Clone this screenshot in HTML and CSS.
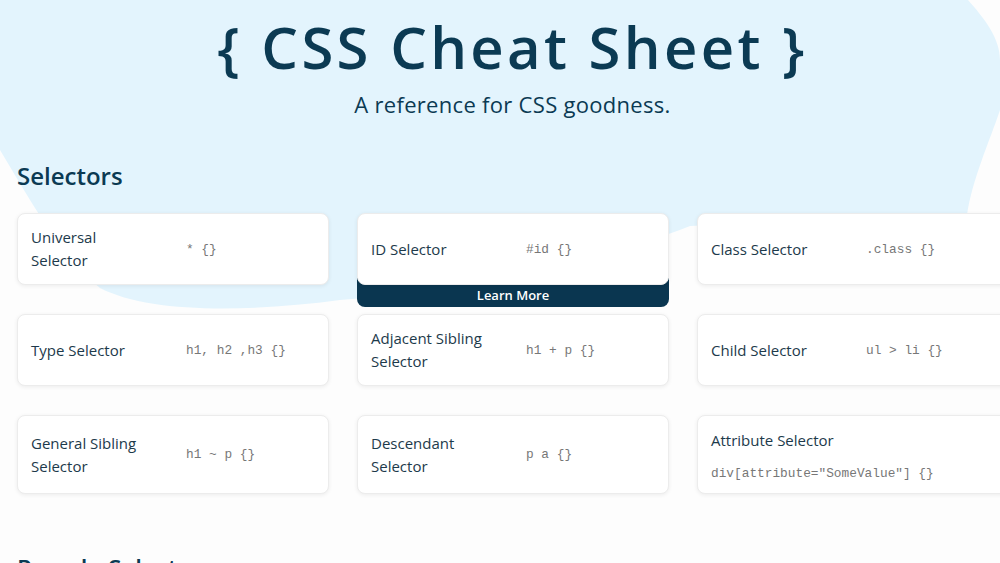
FILE: index.html
```html
<!DOCTYPE html>
<html lang="en">
<head>
    <meta charset="utf-8" />
    <title>CSS Cheat Sheet</title>
    <link rel="stylesheet" href="styles.css">
</head>
<body>
    <svg class="blob" width="1000" height="320" viewBox="0 0 1000 320" aria-hidden="true">
        <path d="M0,0 L968,0 C984,18 1000,38 1000,60 L1000,110 C990,140 972,180 967,215 L690,226 C600,262 440,294 340,300 C250,312 150,314 100,288 C62,258 30,200 0,150 Z" fill="#e3f4fd"/>
    </svg>
    <div class="page">
        <header class="masthead">
            <h1 class="title">{ CSS Cheat Sheet }</h1>
            <p class="subtitle">A reference for CSS goodness.</p>
        </header>

        <section class="group">
            <h2 class="group-title">Selectors</h2>
            <div class="cards">
                <div class="card">
                    <div class="card-name">Universal Selector</div>
                    <code class="card-code">* {}</code>
                </div>
                <div class="card card-active">
                    <div class="card-name">ID Selector</div>
                    <code class="card-code">#id {}</code>
                    <div class="learn-more">Learn More</div>
                </div>
                <div class="card">
                    <div class="card-name">Class Selector</div>
                    <code class="card-code">.class {}</code>
                </div>
                <div class="card">
                    <div class="card-name">Type Selector</div>
                    <code class="card-code">h1, h2 ,h3 {}</code>
                </div>
                <div class="card">
                    <div class="card-name">Adjacent Sibling Selector</div>
                    <code class="card-code">h1 + p {}</code>
                </div>
                <div class="card">
                    <div class="card-name">Child Selector</div>
                    <code class="card-code">ul &gt; li {}</code>
                </div>
                <div class="card">
                    <div class="card-name">General Sibling Selector</div>
                    <code class="card-code">h1 ~ p {}</code>
                </div>
                <div class="card">
                    <div class="card-name">Descendant Selector</div>
                    <code class="card-code">p a {}</code>
                </div>
                <div class="card card-stacked">
                    <div class="card-name">Attribute Selector</div>
                    <code class="card-code">div[attribute="SomeValue"] {}</code>
                </div>
            </div>
        </section>

        <section class="group">
            <h2 class="group-title">Pseudo Selectors</h2>
        </section>
    </div>
</body>
</html>
```

FILE: styles.css
```css
html, body {
  margin: 0;
  padding: 0;
  overflow: hidden;
}
body {
  background: #fdfdfd;
  color: #0b3a53;
  font-family: "Open Sans", "Noto Sans", sans-serif;
  position: relative;
  height: 563px;
}
.blob {
  position: absolute;
  left: 0;
  top: 0;
  z-index: 0;
}
.page {
  position: relative;
  z-index: 1;
  width: 1025px;
  box-sizing: border-box;
  padding: 0 17px;
}
.masthead {
  text-align: center;
  padding-top: 12px;
}
.title {
  margin: 0;
  font-size: 58px;
  line-height: 70px;
  font-weight: 600;
  letter-spacing: 3.3px;
}
.subtitle {
  margin: 9px 0 0;
  font-size: 22px;
  line-height: 26px;
  letter-spacing: 0.3px;
}
.group-title {
  margin: 0 0 22px;
  font-size: 24px;
  line-height: 30px;
  font-weight: 600;
}
.group:first-of-type .group-title {
  margin-top: 44px;
}
.group + .group .group-title {
  margin-top: 59px;
}
.cards {
  display: grid;
  grid-template-columns: repeat(3, 312px);
  column-gap: 28px;
  row-gap: 29px;
}
.card {
  position: relative;
  background: #fff;
  border: 1px solid #ececec;
  border-radius: 8px;
  box-shadow: 0 1px 4px rgba(0, 0, 0, 0.07);
  display: grid;
  grid-template-columns: 120px 1fr;
  column-gap: 35px;
  align-items: center;
  padding: 12px 13px;
  min-height: 46px;
}
.card-name {
  font-size: 15px;
  line-height: 23px;
  color: #1d3a4b;
}
.card-code {
  font-family: "Liberation Mono", "Courier New", monospace;
  font-size: 12.8px;
  color: #777;
  white-space: nowrap;
}
.card-stacked {
  grid-template-columns: 1fr;
  align-content: start;
  row-gap: 14px;
  padding-top: 13px;
}
.learn-more {
  position: absolute;
  left: -1px;
  right: -1px;
  top: 100%;
  margin-top: -6px;
  padding-top: 6px;
  height: 23px;
  line-height: 23px;
  background: #0a3650;
  color: #fff;
  font-size: 13px;
  font-weight: 600;
  text-align: center;
  border-radius: 0 0 8px 8px;
  z-index: -1;
}
```
